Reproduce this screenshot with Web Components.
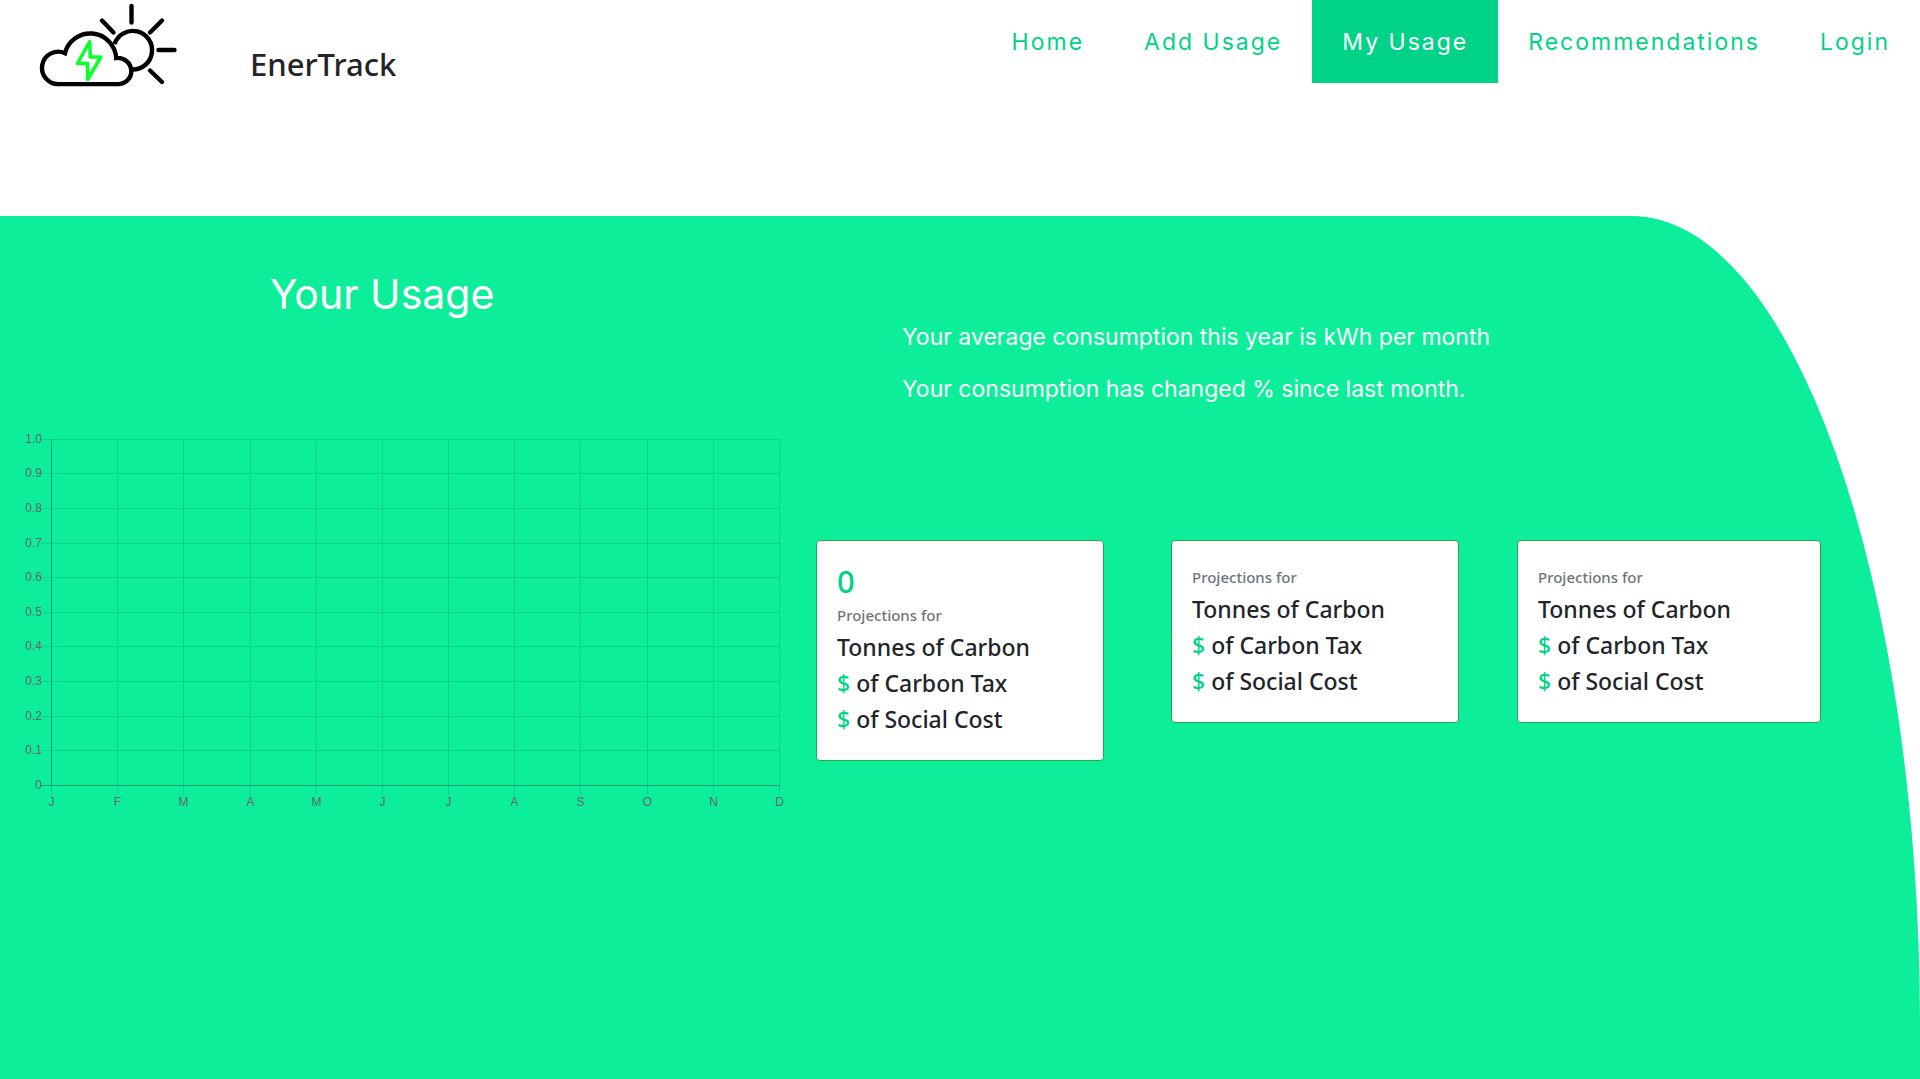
<!DOCTYPE html>
<html lang="en">
<head>
<meta charset="utf-8">
<meta name="viewport" content="width=device-width, initial-scale=1">
<title>EnerTrack - My Usage</title>
<style>
:root{--mint:#0cee99;--accent:#00d387;--ink:#212529;--geo:Inter,sans-serif;--ui:"Noto Sans",sans-serif}
*{box-sizing:border-box}
body{margin:0;min-height:100vh;display:flex;flex-direction:column;background:#fff;color:var(--ink);font-family:var(--ui)}
ener-usage{flex:1}
</style>
</head>
<body>
<ener-header>
  <ener-link href="#home">Home</ener-link>
  <ener-link href="#add">Add Usage</ener-link>
  <ener-link href="#usage" current>My Usage</ener-link>
  <ener-link href="#recommendations">Recommendations</ener-link>
  <ener-link href="#login">Login</ener-link>
</ener-header>
<ener-usage>
  <span slot="title">Your Usage</span>
  <usage-chart slot="chart"></usage-chart>
  <p slot="summary">Your average consumption this year is kWh per month</p>
  <p slot="summary">Your consumption has changed % since last month.</p>
  <projection-card slot="card-first" value="0"></projection-card>
  <projection-card slot="card-second"></projection-card>
  <projection-card slot="card-third"></projection-card>
</ener-usage>
<script>
const define = (name, html, setup) => customElements.define(name, class extends HTMLElement {
  connectedCallback() {
    if (this.shadowRoot) return;
    const t = document.createElement('template');
    t.innerHTML = html;
    this.attachShadow({mode: 'open'}).append(t.content.cloneNode(true));
    if (setup) setup(this, this.shadowRoot);
  }
});

define('ener-logo', `<style>
  :host{display:block;width:144px;height:90px}
  svg{display:block;width:100%;height:100%}
</style>
<svg viewBox="36 0 144 90" fill="none" stroke="#000" stroke-width="4.4" stroke-linecap="round" role="img" aria-label="Cloud and sun">
  <path d="M131.5 6V22.5M102 20.5L113.5 32.5M162 20.5L150 32.5M158.500 50H174.500M150 70.500L162 82"/>
  <path d="M114.500 44A19.300 19.300 0 1 1 132 69.500" stroke-linecap="butt"/>
  <path d="M58.300 84.100H119A13 13 0 0 0 131.300 70.500A13.500 13.500 0 0 0 116.200 58A26 26 0 0 0 65 53.200A16.200 16.200 0 1 0 58.300 84.100Z" stroke-linejoin="miter"/>
  <path d="M89.700 41.500L77.500 63.500H87.700V79.500L100.800 57H90.300Z" stroke="#0cff2c" stroke-width="3.6" stroke-linejoin="round"/>
</svg>`);

define('ener-header', `<style>
  :host{display:block}
  header{display:flex;justify-content:space-between;align-items:flex-start;min-height:216px}
  .brand{display:flex;align-items:flex-start;gap:70px;padding-left:36px}
  h1{margin:0;padding-top:45px;font:500 31px/38px var(--ui)}
  nav{display:flex}
</style>
<header><div class="brand"><ener-logo></ener-logo><h1>EnerTrack</h1></div><nav><slot></slot></nav></header>`);

define('ener-link', `<style>
  :host{display:block}
  a{display:block;padding:25px 30px 23px;font:400 23px/35px var(--geo);letter-spacing:2px;color:var(--accent);text-decoration:none;white-space:nowrap}
  :host([current]) a{background:var(--accent);color:#fff}
</style>
<a><slot></slot></a>`, (el, root) => {
  const a = root.querySelector('a');
  a.href = el.getAttribute('href');
  if (el.hasAttribute('current')) a.setAttribute('aria-current', 'page');
});

define('ener-usage', `<style>
  :host{display:block;background:var(--mint);border-top-right-radius:15% 75vh;color:#fff}
  main{display:grid;grid-template-columns:806fr 1114fr}
  h2{margin:0;padding:48px 42px 0 0;font:400 41px/60px var(--geo);text-align:center}
  .left{display:flex;flex-direction:column;gap:100px}
  .summary{display:flex;flex-direction:column;gap:16px;padding:103px 0 0 96px;font:400 23px/36px var(--geo)}
  ::slotted(p){margin:0}
  .cards{display:grid;grid-template-columns:288fr 67fr 288fr 58fr 304fr;align-items:start;padding:133px 99px 0 10px}
  .cards div:nth-child(2){grid-column:3}
  .cards div:nth-child(3){grid-column:5}
</style>
<main>
  <section class="left"><h2><slot name="title"></slot></h2><slot name="chart"></slot></section>
  <section>
    <div class="summary"><slot name="summary"></slot></div>
    <div class="cards"><div><slot name="card-first"></slot></div><div><slot name="card-second"></slot></div><div><slot name="card-third"></slot></div></div>
  </section>
</main>`);

define('usage-chart', `<style>
  :host{display:block}
  svg{display:block;width:100%;height:auto}
  text{font:12px "Liberation Sans",Arial,sans-serif;fill:#666}
  path{stroke:#000;stroke-opacity:.1;fill:none}
  path.axis{stroke-opacity:.325}
</style>
<svg viewBox="0 0 806 400" role="img" aria-label="Usage by month"></svg>`, (el, root) => {
  const left = 51, right = 779, top = 15, bottom = 361;
  const line = (d, axis) => `<path d="${d}"${axis ? ' class="axis"' : ''}/>`;
  let out = '';
  'JFMAMJJASOND'.split('').forEach((m, i) => {
    const x = Math.round(left + i * (right - left) / 11) + .5;
    out += line(`M${x} ${top}V${bottom}`, i === 0) + line(`M${x} ${bottom}V${bottom + 10}`);
    out += `<text x="${x}" y="${bottom + 21}" text-anchor="middle">${m}</text>`;
  });
  for (let i = 0; i <= 10; i++) {
    const y = Math.floor(bottom - i * (bottom - top) / 10 + .2) + .5;
    out += line(`M${left - 10} ${y}H${left}`, i === 0) + line(`M${left} ${y}H${right + 1}`, i === 0);
    out += `<text x="${left - 9}" y="${y + 3.5}" text-anchor="end">${i ? (i / 10).toFixed(1) : '0'}</text>`;
  }
  root.querySelector('svg').innerHTML = out;
});

define('projection-card', `<style>
  :host{display:block;background:#fff;border:1px solid #28a745;border-radius:4px;padding:21px 20px 23px;color:var(--ink);font-family:var(--ui)}
  h3,h4,p{margin:0;font-weight:500}
  h3{font-size:31px;line-height:38px;color:var(--accent)}
  h4{margin:5px 0 4px;font-size:15px;line-height:20px;color:#6c757d}
  p{font-size:23px;line-height:36px}
  span{color:var(--accent)}
</style>
<h3></h3><h4>Projections for</h4>
<p>Tonnes of Carbon</p><p><span>$</span> of Carbon Tax</p><p><span>$</span> of Social Cost</p>`, (el, root) => {
  const h = root.querySelector('h3');
  if (el.hasAttribute('value')) h.textContent = el.getAttribute('value'); else h.remove();
});
</script>
</body>
</html>
